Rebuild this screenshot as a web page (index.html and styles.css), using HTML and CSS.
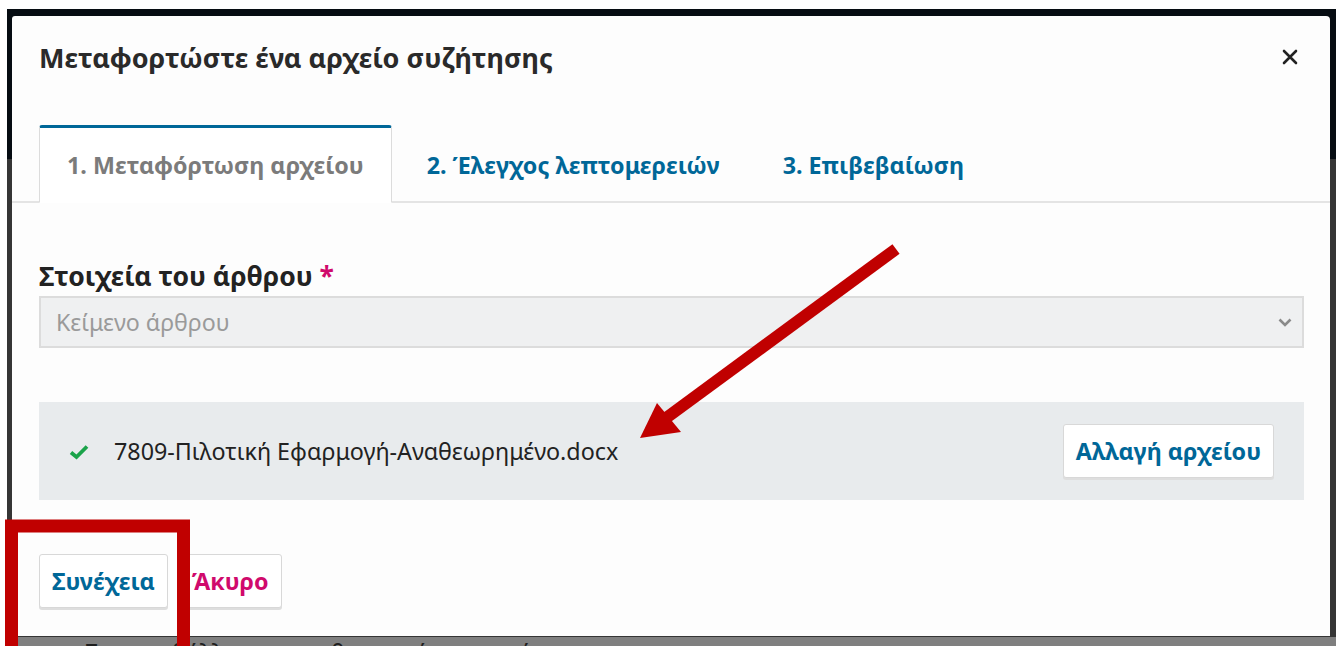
FILE: index.html
```html
<!DOCTYPE html>
<html lang="el">
<head>
<meta charset="utf-8">
<title>Μεταφορτώστε ένα αρχείο συζήτησης</title>
<link rel="stylesheet" href="styles.css">
</head>
<body>
<div class="screen">
  <div class="backdrop">
    <div class="bd-header"></div>
    <div class="bd-body"></div>
    <div class="bd-foot"><span class="behind-text">Σας υποβάλλω την αναθεωρημένη εργασία</span></div>
  </div>

  <div class="modal" role="dialog">
    <div class="modal-header">
      <h2 class="modal-title">Μεταφορτώστε ένα αρχείο συζήτησης</h2>
      <button class="close" aria-label="Κλείσιμο">
        <svg width="16" height="16" viewBox="0 0 16 16"><path d="M2 2 L14 14 M14 2 L2 14" stroke="#222" stroke-width="2.6" stroke-linecap="round"/></svg>
      </button>
    </div>

    <div class="tabs">
      <div class="tab active">1. Μεταφόρτωση αρχείου</div>
      <div class="tab">2. Έλεγχος λεπτομερειών</div>
      <div class="tab">3. Επιβεβαίωση</div>
    </div>

    <div class="modal-body">
      <label class="field-label">Στοιχεία του άρθρου <span class="req">*</span></label>
      <div class="select">
        <span class="placeholder">Κείμενο άρθρου</span>
        <svg class="chevron" width="14" height="9" viewBox="0 0 14 9"><path d="M1.5 1.5 L7 7 L12.5 1.5" fill="none" stroke="#8a8a8a" stroke-width="2.6"/></svg>
      </div>

      <div class="file-row">
        <div class="file-info">
          <svg class="check" width="20" height="16" viewBox="0 0 20 16"><path d="M2 8.5 L7.5 13 L18 2.5" fill="none" stroke="#1aa34a" stroke-width="3.8"/></svg>
          <span class="file-name">7809-Πιλοτική Εφαρμογή-Αναθεωρημένο.docx</span>
        </div>
        <button class="btn btn-blue">Αλλαγή αρχείου</button>
      </div>

      <div class="actions">
        <button class="btn btn-blue">Συνέχεια</button>
        <button class="btn btn-pink">Άκυρο</button>
      </div>
    </div>
  </div>

  <svg class="annotations" width="1336" height="646" viewBox="0 0 1336 646">
    <!-- pointer to the uploaded file -->
    <line x1="896" y1="249" x2="662" y2="421" stroke="#c00000" stroke-width="12"/>
    <polygon points="640,438 657,403 681,432" fill="#c00000"/>
    <!-- frame around the continue button -->
    <rect x="11.5" y="526" width="172" height="140" fill="none" stroke="#c00000" stroke-width="13"/>
  </svg>
</div>
</body>
</html>
```

FILE: styles.css
```css
* { box-sizing: border-box; }

html, body {
  margin: 0;
  padding: 0;
  background: #ffffff;
}

body {
  font-family: "Noto Sans", "Open Sans", sans-serif;
  color: #222;
}

.screen {
  position: relative;
  width: 1336px;
  height: 646px;
  overflow: hidden;
  padding: 9px 0 0 7px;
}

/* dimmed page behind the dialog */
.backdrop {
  display: flex;
  flex-direction: column;
  height: 100%;
}
.bd-header {
  height: 150px;
  background: #060c12;
}
.bd-body {
  flex: 1;
  background: #353535;
}
.bd-foot {
  height: 9px;
  background: #7f7f7f;
  padding-left: 78px;
  overflow: hidden;
}
.behind-text {
  display: block;
  font-size: 23px;
  line-height: 1;
  margin-top: 4px;
  color: #1e1e1e;
  white-space: nowrap;
}

/* dialog */
.modal {
  position: absolute;
  left: 12px;
  top: 16px;
  width: 1318px;
  height: 620px;
  background: #fdfdfd;
  border-radius: 3px 4px 0 0;
}

.modal-header {
  display: flex;
  align-items: center;
  justify-content: space-between;
  height: 82px;
  padding: 0 32px 0 27px;
}
.modal-title {
  margin: 0;
  font-size: 27px;
  font-weight: 700;
  color: #2a2a2a;
}
.close {
  border: 0;
  background: none;
  padding: 0;
  width: 16px;
  height: 16px;
  display: flex;
}

.tabs {
  display: flex;
  margin-top: 27px;
  padding-left: 27px;
  border-bottom: 2px solid #e4e4e4;
}
.tab {
  height: 78px;
  display: flex;
  align-items: center;
  padding: 0 27px 0 27px;
  margin-right: 7px;
  font-size: 23.3px;
  font-weight: 700;
  color: #006798;
  border: 1px solid transparent;
  border-top: 3px solid transparent;
  margin-bottom: -2px;
  white-space: nowrap;
}
.tab.active {
  background: #fff;
  color: #7b7b7b;
  border-color: #dcdcdc;
  border-top-color: #006798;
  border-bottom-color: #fff;
  border-radius: 3px 3px 0 0;
}

.modal-body {
  padding: 55px 26px 0 27px;
}

.field-label {
  display: block;
  font-size: 26.5px;
  font-weight: 700;
  color: #222;
  line-height: 36px;
}
.req {
  color: #d00a6c;
}

.select {
  margin-top: 2px;
  height: 52px;
  background: #eff0f1;
  border: 2px solid #dcdcdc;
  display: flex;
  align-items: center;
  justify-content: space-between;
  padding: 0 10px 0 15px;
}
.placeholder {
  font-size: 23.2px;
  color: #9a9a9a;
}

.file-row {
  margin-top: 54px;
  height: 98px;
  background: #e8ebed;
  display: flex;
  align-items: center;
  justify-content: space-between;
  padding: 0 30px 0 30px;
}
.file-info {
  display: flex;
  align-items: center;
  gap: 25px;
}
.check { margin-top: 2px; }
.file-name {
  font-size: 23.3px;
  color: #222;
}

.btn {
  font-family: inherit;
  font-size: 23.3px;
  font-weight: 700;
  background: #fff;
  border: 1px solid #d8d8d8;
  border-radius: 3px;
  box-shadow: 0 2px 0 #dedede;
  height: 54px;
  padding: 0 12px;
  cursor: pointer;
}
.btn-blue { color: #006798; }
.btn-pink { color: #d00a6c; }

.actions {
  margin-top: 54px;
  display: flex;
  gap: 11px;
}

/* annotation layer over the dialog */
.annotations {
  position: absolute;
  left: 0;
  top: 0;
  pointer-events: none;
}
```
